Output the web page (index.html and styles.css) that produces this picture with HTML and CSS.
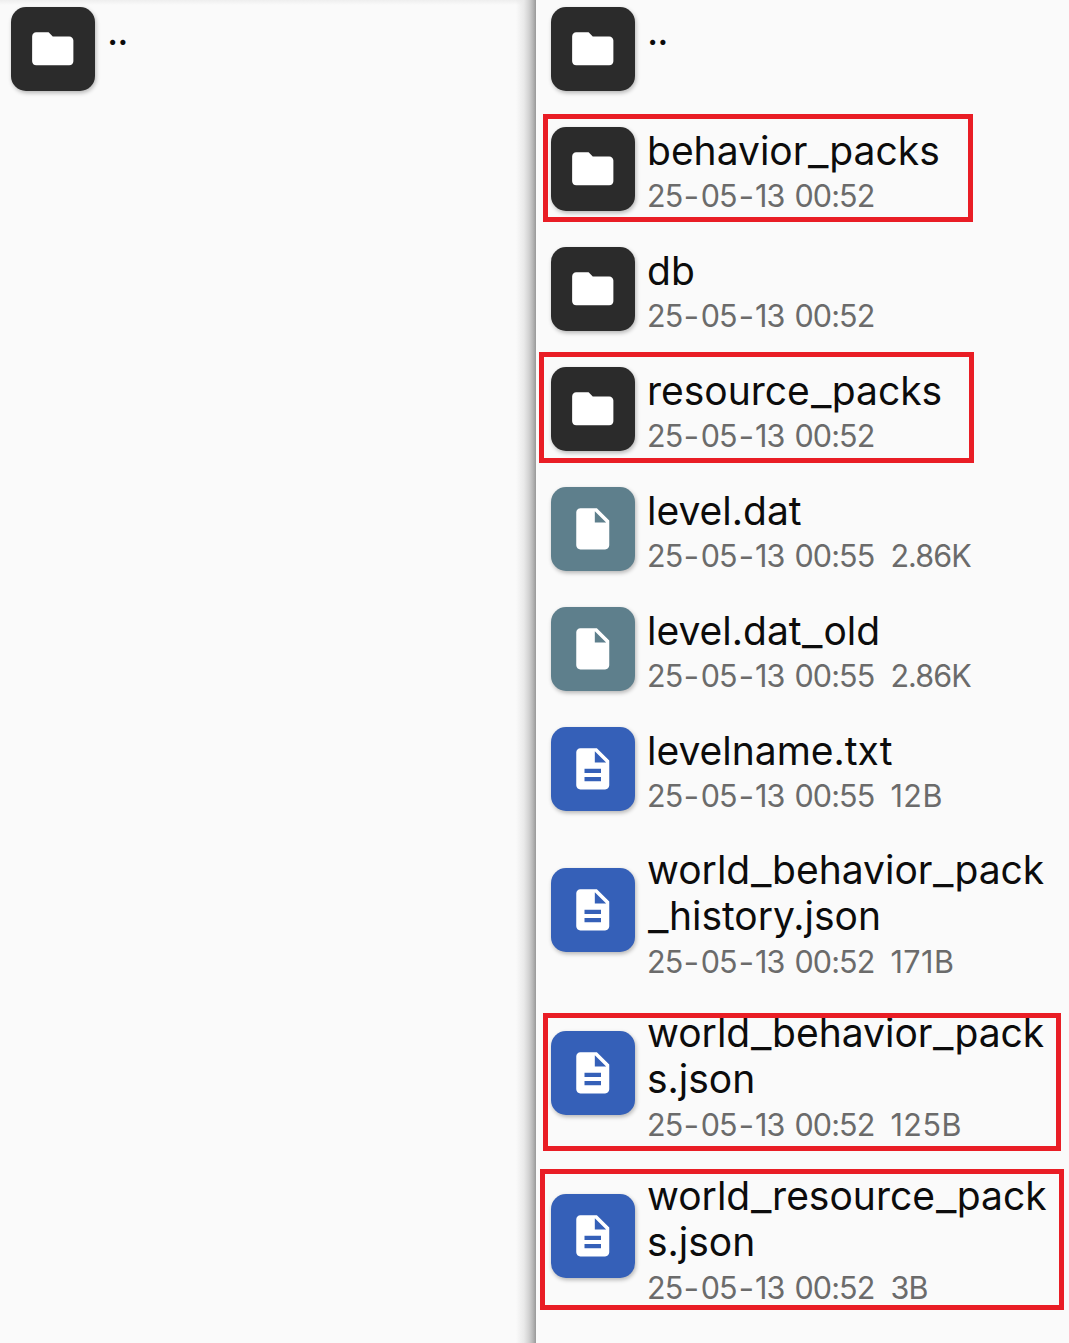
FILE: index.html
```
<!DOCTYPE html>
<html lang="en">
<head>
<meta charset="utf-8">
<title>Files</title>
<link rel="stylesheet" href="styles.css">
</head>
<body>
<svg width="0" height="0" class="symbols">
  <symbol id="folder" viewBox="0 0 24 24"><path d="M10 4H4C2.900 4 2.010 4.900 2.010 6L2 18C2 19.100 2.900 20 4 20H20C21.100 20 22 19.100 22 18V8C22 6.900 21.100 6 20 6H12L10 4z"/></symbol>
  <symbol id="file" viewBox="0 0 24 24"><path d="M6 2c-1.100 0-1.990.9-1.990 2L4 20c0 1.100.89 2 1.990 2H18c1.100 0 2-.9 2-2V8l-6-6H6zm7 7V3.500L18.500 9H13z"/></symbol>
  <symbol id="text" viewBox="0 0 24 24"><path d="M14 2H6c-1.100 0-1.990.9-1.990 2L4 20c0 1.100.89 2 1.990 2H18c1.100 0 2-.9 2-2V8l-6-6zm2 16H8v-2h8v2zm0-4H8v-2h8v2zm-3-5V3.500L18.500 9H13z"/></symbol>
</svg>
<main class="panes">
  <section class="pane pane-left">
    <div class="row"><div class="tile folder"><svg><use href="#folder"/></svg></div><div class="info"><div class="name dots">..</div></div></div>
  </section>
  <section class="pane pane-right">
    <div class="row"><div class="tile folder"><svg><use href="#folder"/></svg></div><div class="info"><div class="name dots">..</div></div></div>
    <div class="row"><div class="tile folder"><svg><use href="#folder"/></svg></div><div class="info"><div class="name">behavior<b>_</b>packs</div><div class="meta"><span>25<b>-</b>05<b>-</b>13 00:52</span></div></div><i class="mark mark-behavior"></i></div>
    <div class="row"><div class="tile folder"><svg><use href="#folder"/></svg></div><div class="info"><div class="name">db</div><div class="meta"><span>25<b>-</b>05<b>-</b>13 00:52</span></div></div></div>
    <div class="row"><div class="tile folder"><svg><use href="#folder"/></svg></div><div class="info"><div class="name">resource<b>_</b>packs</div><div class="meta"><span>25<b>-</b>05<b>-</b>13 00:52</span></div></div><i class="mark mark-resource"></i></div>
    <div class="row"><div class="tile data"><svg><use href="#file"/></svg></div><div class="info"><div class="name">level.dat</div><div class="meta"><span>25<b>-</b>05<b>-</b>13 00:55</span><span>2.86K</span></div></div></div>
    <div class="row"><div class="tile data"><svg><use href="#file"/></svg></div><div class="info"><div class="name">level.dat<b>_</b>old</div><div class="meta"><span>25<b>-</b>05<b>-</b>13 00:55</span><span>2.86K</span></div></div></div>
    <div class="row"><div class="tile text"><svg><use href="#text"/></svg></div><div class="info"><div class="name">levelname.txt</div><div class="meta"><span>25<b>-</b>05<b>-</b>13 00:55</span><span class="bytes">12B</span></div></div></div>
    <div class="row tall"><div class="tile text"><svg><use href="#text"/></svg></div><div class="info"><div class="name">world<b>_</b>behavior<b>_</b>pack<br><b>_</b>history.json</div><div class="meta"><span>25<b>-</b>05<b>-</b>13 00:52</span><span class="bytes">171B</span></div></div></div>
    <div class="row tall"><div class="tile text"><svg><use href="#text"/></svg></div><div class="info"><div class="name">world<b>_</b>behavior<b>_</b>pack<br>s.json</div><div class="meta"><span>25<b>-</b>05<b>-</b>13 00:52</span><span class="bytes">125B</span></div></div><i class="mark mark-behavior-json"></i></div>
    <div class="row tall"><div class="tile text"><svg><use href="#text"/></svg></div><div class="info"><div class="name">world<b>_</b>resource<b>_</b>pack<br>s.json</div><div class="meta"><span>25<b>-</b>05<b>-</b>13 00:52</span><span>3B</span></div></div><i class="mark mark-resource-json"></i></div>
  </section>
</main>
</body>
</html>
```
FILE: styles.css
```
* { box-sizing: border-box; }
body { margin: 0; background: #fafafa; font-family: Inter, "Noto Sans", sans-serif; }
.symbols { position: absolute; }
.panes { display: grid; grid-template-columns: 536px 1fr; height: 1343px; overflow: hidden; }
.pane { padding-top: 7px; }
.pane-left {
  padding-left: 11px;
  background:
    linear-gradient(to left, #989898 0, #b5b5b5 3px, #d2d2d2 7px, #e9e9e9 12px, rgba(250,250,250,0) 20px) right / 20px 100% no-repeat,
    linear-gradient(#eeeeee, #fafafa) top / 100% 5px no-repeat;
}
.pane-right { padding-left: 15px; }
.row { position: relative; display: flex; gap: 12px; height: 120px; }
.tall { height: 163px; }
.tall .tile { margin-top: 21px; }
.tile {
  flex: none; display: flex; align-items: center; justify-content: center;
  width: 84px; height: 84px; border-radius: 15px;
  box-shadow: 1px 2px 4px rgba(0,0,0,.28);
}
.tile svg { width: 49.500px; height: 49.500px; margin: -1px 0 0 -1px; fill: #fff; }
.folder { background: #2b2b2b; }
.data { background: #5e7f8c; }
.text { background: #3560b8; }
.info { white-space: nowrap; padding-top: 1px; }
.tall .info { padding-top: 0; }
.name { font-size: 39px; line-height: 46px; color: #0c0c0c; font-weight: 380; }
.dots { letter-spacing: -1px; }
b { display: inline-block; font-weight: inherit; line-height: 1; text-align: center; }
.name b { width: 18.500px; margin: 0 1.700px; transform: scaleX(1.150); }
.meta {
  display: flex; gap: 16px; margin-top: 3px;
  font-size: 30.500px; line-height: 38px; color: #6b6b6b; font-weight: 370;
  letter-spacing: -.9px; word-spacing: 2.500px;
}
.tall .meta { margin-top: 4px; }
.meta b { width: 14.500px; margin: 0 1.900px; letter-spacing: 0; transform: scaleX(1.120); }
.bytes { letter-spacing: .5px; }
.mark { position: absolute; border: 5px solid #e91d25; }
.mark-behavior { left: -8px; top: -13px; width: 430px; height: 108px; }
.mark-resource { left: -12px; top: -15px; width: 435px; height: 111px; }
.mark-behavior-json { left: -8px; top: 3px; width: 518px; height: 138px; }
.mark-resource-json { left: -11px; top: -4px; width: 524px; height: 141px; }
```
